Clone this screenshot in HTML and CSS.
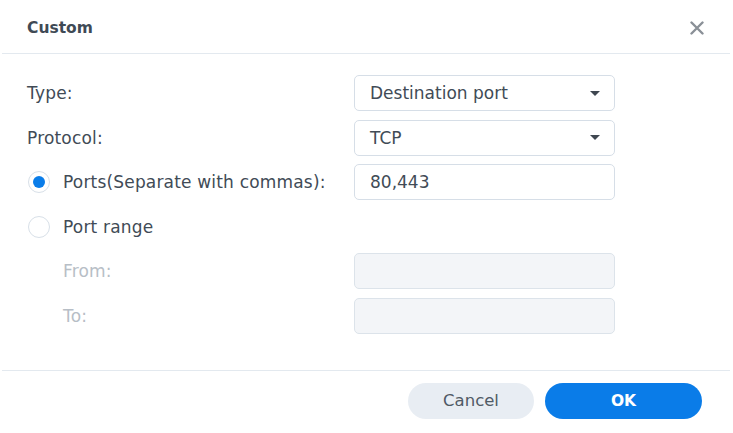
FILE: index.html
```html
<!DOCTYPE html>
<html>
<head>
<meta charset="utf-8">
<link rel="stylesheet" href="styles.css">
</head>
<body>
<div class="dialog">
  <div class="header">
    <span class="title">Custom</span>
    <svg class="close" width="14" height="14" viewBox="0 0 14 14"><path d="M1.5 1.5 L12.5 12.5 M12.5 1.5 L1.5 12.5" stroke="#8a9097" stroke-width="2.4" stroke-linecap="round"/></svg>
  </div>
  <div class="divider"></div>
  <div class="body">
    <div class="row">
      <div class="label">Type:</div>
      <div class="field select"><span>Destination port</span><span class="caret"></span></div>
    </div>
    <div class="row">
      <div class="label">Protocol:</div>
      <div class="field select"><span>TCP</span><span class="caret"></span></div>
    </div>
    <div class="row">
      <div class="label"><span class="radio checked"></span>Ports(Separate with commas):</div>
      <div class="field"><span>80,443</span></div>
    </div>
    <div class="row">
      <div class="label"><span class="radio"></span>Port range</div>
    </div>
    <div class="row">
      <div class="label sub disabled">From:</div>
      <div class="field off"></div>
    </div>
    <div class="row">
      <div class="label sub disabled">To:</div>
      <div class="field off"></div>
    </div>
  </div>
  <div class="divider"></div>
  <div class="footer">
    <button class="btn cancel">Cancel</button>
    <button class="btn ok">OK</button>
  </div>
</div>
</body>
</html>
```

FILE: styles.css
```css
html, body {
  margin: 0;
  padding: 0;
  background: #ffffff;
}
body {
  font-family: "DejaVu Sans", Verdana, sans-serif;
  color: #414b56;
  width: 733px;
  height: 433px;
  overflow: hidden;
}
.dialog {
  display: flex;
  flex-direction: column;
}
.header {
  height: 53px;
  display: flex;
  align-items: center;
  justify-content: space-between;
  padding: 0 29px 0 27px;
}
.title {
  font-weight: bold;
  font-size: 15.5px;
  color: #3f4a55;
  margin-top: 3px;
}
.close {
  display: block;
  margin-top: 2px;
}
.divider {
  height: 1px;
  background: #e3e9ef;
  margin: 0 3px 0 2px;
}
.body {
  padding: 21px 0 36px 27px;
  display: flex;
  flex-direction: column;
  gap: 8.5px;
}
.row {
  height: 36px;
  display: flex;
  align-items: center;
}
.label {
  width: 327px;
  font-size: 17px;
  letter-spacing: 0.18px;
  display: flex;
  align-items: center;
  white-space: nowrap;
}
.label.sub {
  padding-left: 36px;
  width: 291px;
}
.label.disabled {
  color: #b7bec6;
}
.radio {
  width: 20px;
  height: 20px;
  border-radius: 50%;
  border: 1.5px solid #d8e0e8;
  box-sizing: content-box;
  margin-left: 1px;
  margin-right: 13px;
  position: relative;
  flex: none;
}
.radio.checked::after {
  content: "";
  position: absolute;
  left: 4px;
  top: 4px;
  width: 12px;
  height: 12px;
  border-radius: 50%;
  background: #0a7de9;
}
.field {
  width: 261px;
  height: 36px;
  box-sizing: border-box;
  border: 1px solid #d6dee7;
  border-radius: 5px;
  display: flex;
  align-items: center;
  justify-content: space-between;
  padding: 0 14px 0 15px;
  font-size: 17px;
  color: #414b56;
}
.field.off {
  background: #f3f5f8;
  border-color: #dce3ea;
}
.caret {
  width: 0;
  height: 0;
  border-left: 5px solid transparent;
  border-right: 5px solid transparent;
  border-top: 5px solid #3f4750;
}
.footer {
  display: flex;
  justify-content: flex-end;
  gap: 11px;
  padding: 12px 31px 0 0;
}
.btn {
  height: 36px;
  border: none;
  border-radius: 18px;
  font-family: "DejaVu Sans", Verdana, sans-serif;
  font-size: 16.5px;
  padding: 0;
}
.cancel {
  width: 126px;
  background: #e8edf3;
  color: #505a65;
}
.ok {
  width: 157px;
  background: #0a7ce8;
  color: #ffffff;
  font-weight: bold;
  font-size: 15.5px;
}
```
